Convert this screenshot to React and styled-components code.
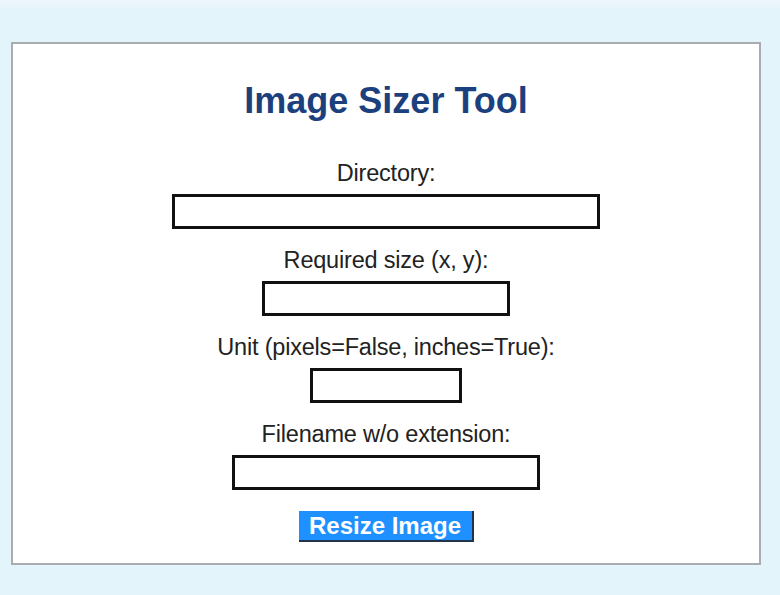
import React from "react";
import styled, { createGlobalStyle } from "styled-components";

const GlobalStyle = createGlobalStyle`
  html, body {
    margin: 0;
    padding: 0;
  }
  body {
    background: linear-gradient(#edf7fb 0, #e3f4fb 12px) #e3f4fb;
    font-family: "Liberation Sans", Arial, sans-serif;
    min-height: 595px;
  }
`;

const Page = styled.div`
  padding: 42px 0 0 11px;
`;

const Card = styled.form`
  width: 750px;
  height: 523px;
  box-sizing: border-box;
  background: #fff;
  border: 2px solid #a9adaf;
  display: flex;
  flex-direction: column;
  align-items: center;
  padding-top: 36px;
`;

const Title = styled.h1`
  margin: 0 0 38px;
  font-size: 36px;
  line-height: 42px;
  font-weight: 700;
  color: #1c3f7d;
`;

const Field = styled.div`
  display: flex;
  flex-direction: column;
  align-items: center;
  gap: 8px;
  margin-bottom: 18px;
`;

const Label = styled.label`
  font-size: 23.5px;
  line-height: 26px;
  color: #222;
  letter-spacing: -0.2px;
`;

const Input = styled.input`
  width: ${(p) => p.$w}px;
  height: 35px;
  box-sizing: border-box;
  border: 3px solid #111;
  background: #fff;
  padding: 0 6px;
  font-size: 18px;
  outline: none;
`;

const Button = styled.button`
  margin-top: 3px;
  width: 175px;
  height: 31px;
  box-sizing: border-box;
  background: #1e90ff;
  color: #fff;
  border: none;
  border-right: 2px solid #23344a;
  border-bottom: 2px solid #23344a;
  font-family: "Liberation Sans", Arial, sans-serif;
  font-size: 24px;
  font-weight: 700;
  line-height: 27px;
  padding: 0;
  cursor: pointer;
`;

const fields = [
  { id: "dir", label: "Directory:", w: 428 },
  { id: "size", label: "Required size (x, y):", w: 248 },
  { id: "unit", label: "Unit (pixels=False, inches=True):", w: 152 },
  { id: "name", label: "Filename w/o extension:", w: 308 },
];

export default function App() {
  return (
    <>
      <GlobalStyle />
      <Page>
        <Card onSubmit={(e) => e.preventDefault()}>
          <Title>Image Sizer Tool</Title>
          {fields.map((f) => (
            <Field key={f.id}>
              <Label htmlFor={f.id}>{f.label}</Label>
              <Input id={f.id} type="text" $w={f.w} />
            </Field>
          ))}
          <Button type="submit">Resize Image</Button>
        </Card>
      </Page>
    </>
  );
}
